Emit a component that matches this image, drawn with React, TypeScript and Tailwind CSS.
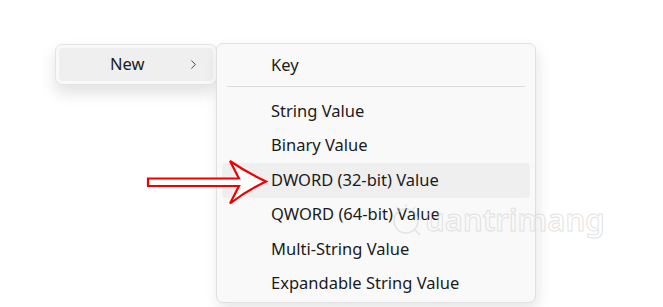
import { ChevronRight } from "lucide-react";

const ITEMS = [
  "String Value",
  "Binary Value",
  "DWORD (32-bit) Value",
  "QWORD (64-bit) Value",
  "Multi-String Value",
  "Expandable String Value",
];

export default function App() {
  return (
    <div className="relative h-[307px] w-[663px] overflow-hidden bg-white font-['Segoe_UI','Noto_Sans',sans-serif] text-[16.5px] text-[#1b1b1b]">
      <div className="flex items-start pl-[55px] pt-[43px]">
        {/* parent menu */}
        <div className="mt-[1px] w-[162px] rounded-[7px] border border-[#e3e3e3] bg-[#f9f9f9] p-[3px] shadow-[0_8px_16px_rgba(0,0,0,0.12)]">
          <div className="flex h-[33px] items-center rounded-[4px] bg-[#efefef] pl-[51px] pr-[12px]">
            <span className="flex-1">New</span>
            <ChevronRight size={15} strokeWidth={1.4} className="text-[#333]" />
          </div>
        </div>

        {/* sub menu */}
        <div className="-ml-[1px] w-[320px] rounded-[7px] border border-[#e0e0e0] bg-[#f9f9f9] px-[5px] pb-[1px] pt-[4px] shadow-[2px_6px_14px_rgba(0,0,0,0.10)]">
          <div className="flex h-[34px] items-center pl-[49px]">Key</div>
          <div className="mx-[5px] mb-[7px] mt-[4px] h-px bg-[#dcdcdc]" />
          {ITEMS.map((t) => (
            <div
              key={t}
              className={`flex h-[34.5px] items-center rounded-[4px] pl-[49px] ${
                t.startsWith("DWORD") ? "bg-[#efefef]" : ""
              }`}
            >
              {t}
            </div>
          ))}
        </div>
      </div>

      {/* red arrow callout */}
      <svg
        className="absolute left-0 top-0"
        width="663"
        height="307"
        viewBox="0 0 663 307"
        fill="none"
      >
        <path
          d="M148 178.5 H239 L230 161 Q246 172 266 181.5 Q246 191 230 203.5 L239 186 H148 Z"
          fill="#fff"
          stroke="#f20000"
          strokeWidth="2.2"
          strokeLinejoin="miter"
        />
      </svg>

      {/* watermark */}
      <div className="pointer-events-none absolute left-[388px] top-[200px] flex items-center gap-[1px] opacity-60">
        <svg width="36" height="38" viewBox="0 0 36 38" fill="none" stroke="#d6d6d6" strokeWidth="1.5">
          <circle cx="18" cy="21" r="12" />
          <path d="M18 4v3M9 7l2 2.5M27 7l-2 2.5M26 29l6 6" />
        </svg>
        <span className="font-['Noto_Sans',sans-serif] text-[31px] font-semibold leading-none text-transparent [-webkit-text-stroke:1px_#d2d2d2]">
          uantrimang
        </span>
      </div>
    </div>
  );
}
